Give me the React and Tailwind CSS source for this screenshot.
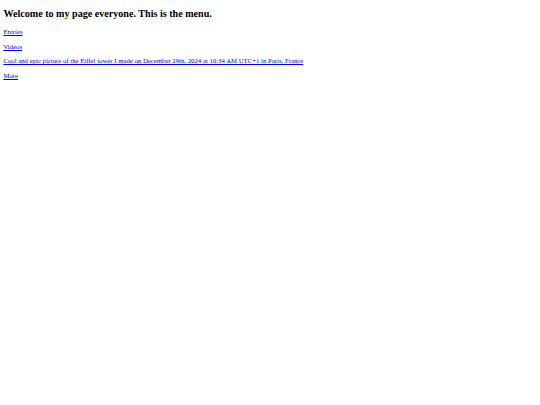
export default function App() {
  const links = [
    "Entries",
    "Videos",
    "Cool and epic picture of the Eiffel tower I made on December 29th, 2024 at 10:34 AM UTC+1 in Paris, France",
    "More",
  ];
  return (
    <div className="min-h-[405px] w-[540px] bg-white px-[3.4px] pt-[7px] text-black" style={{ fontFamily: '"Liberation Serif", "Times New Roman", serif' }}>
      <h1 className="text-[10.1px] font-bold leading-[14px]">Welcome to my page everyone. This is the menu.</h1>
      <div className="mt-[6px] flex flex-col gap-[5.5px]">
        {links.map((l) => (
          <p key={l} className="text-[6.76px] leading-[9px]">
            <a href="#" className="text-[#0000ee] underline">{l}</a>
          </p>
        ))}
      </div>
    </div>
  );
}
